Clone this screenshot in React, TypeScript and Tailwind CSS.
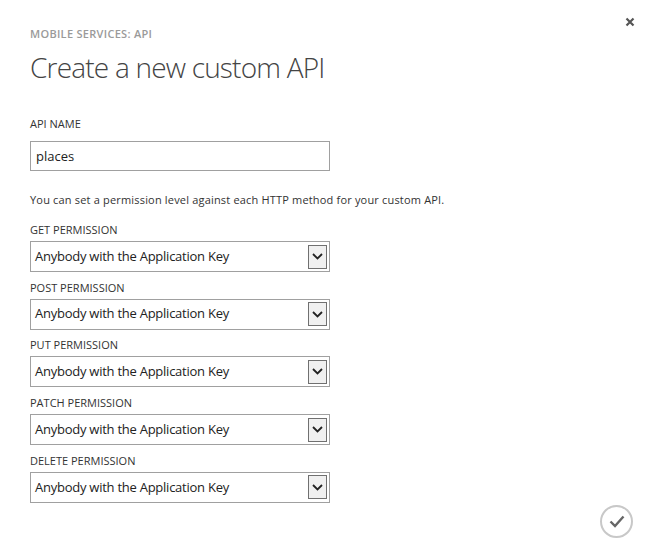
import React, { useState } from 'react'

const methods = ['GET', 'POST', 'PUT', 'PATCH', 'DELETE']

function PermissionSelect({ method }: { method: string }) {
  return (
    <div>
      <label className="block text-[11px] leading-[14px] text-[#333] uppercase">{method} Permission</label>
      <div className="mt-[4px] w-[300px] h-[31px] border border-[#a0a0a0] bg-white flex items-center justify-between pl-[4px] pr-[2px]">
        <span className="text-[13px] tracking-[-0.25px] text-[#222]">Anybody with the Application Key</span>
        <span className="w-[19px] h-[24px] border border-[#707070] bg-[#f0f0f0] flex items-center justify-center">
          <svg width="11" height="7" viewBox="0 0 11 7">
            <path d="M1 1 L5.5 5.5 L10 1" fill="none" stroke="#222" strokeWidth="1.8" />
          </svg>
        </span>
      </div>
    </div>
  )
}

export default function App() {
  const [name, setName] = useState('places')

  return (
    <div className="relative w-[650px] h-[560px] bg-white font-['Segoe_UI','Open_Sans',sans-serif] overflow-hidden">
      <button className="absolute top-[17px] right-[15px] text-[#555]">
        <svg width="10" height="10" viewBox="0 0 10 10">
          <path d="M1.5 1.5 L8.5 8.5 M8.5 1.5 L1.5 8.5" stroke="#555" strokeWidth="2.2" />
        </svg>
      </button>

      <div className="px-[30px] pt-[26px]">
        <p className="text-[11px] font-semibold tracking-[0.3px] text-[#9a9a9a] uppercase leading-[16px]">Mobile Services: API</p>
        <h1 className="mt-[7px] text-[28px] font-light tracking-[-0.8px] text-[#444] leading-[36px]">Create a new custom API</h1>

        <label className="block mt-[32px] text-[11px] leading-[14px] text-[#333] uppercase">API Name</label>
        <input
          value={name}
          onChange={e => setName(e.target.value)}
          className="mt-[10px] w-[300px] h-[30px] border border-[#a0a0a0] px-[5px] text-[13px] text-[#222] focus:outline-none"
        />

        <p className="mt-[22px] text-[11px] tracking-[0.18px] text-[#333] leading-[14px]">
          You can set a permission level against each HTTP method for your custom API.
        </p>

        <div className="mt-[16px] flex flex-col gap-[8.7px]">
          {methods.map(m => (
            <PermissionSelect key={m} method={m} />
          ))}
        </div>
      </div>

      <button className="absolute right-[17px] bottom-[22px] w-[33px] h-[33px] rounded-full border-2 border-[#c8c8c8] flex items-center justify-center">
        <svg width="16" height="13" viewBox="0 0 16 13">
          <path d="M1.5 6.5 L6 11 L14.5 1.5" fill="none" stroke="#666" strokeWidth="2.4" />
        </svg>
      </button>
    </div>
  )
}
